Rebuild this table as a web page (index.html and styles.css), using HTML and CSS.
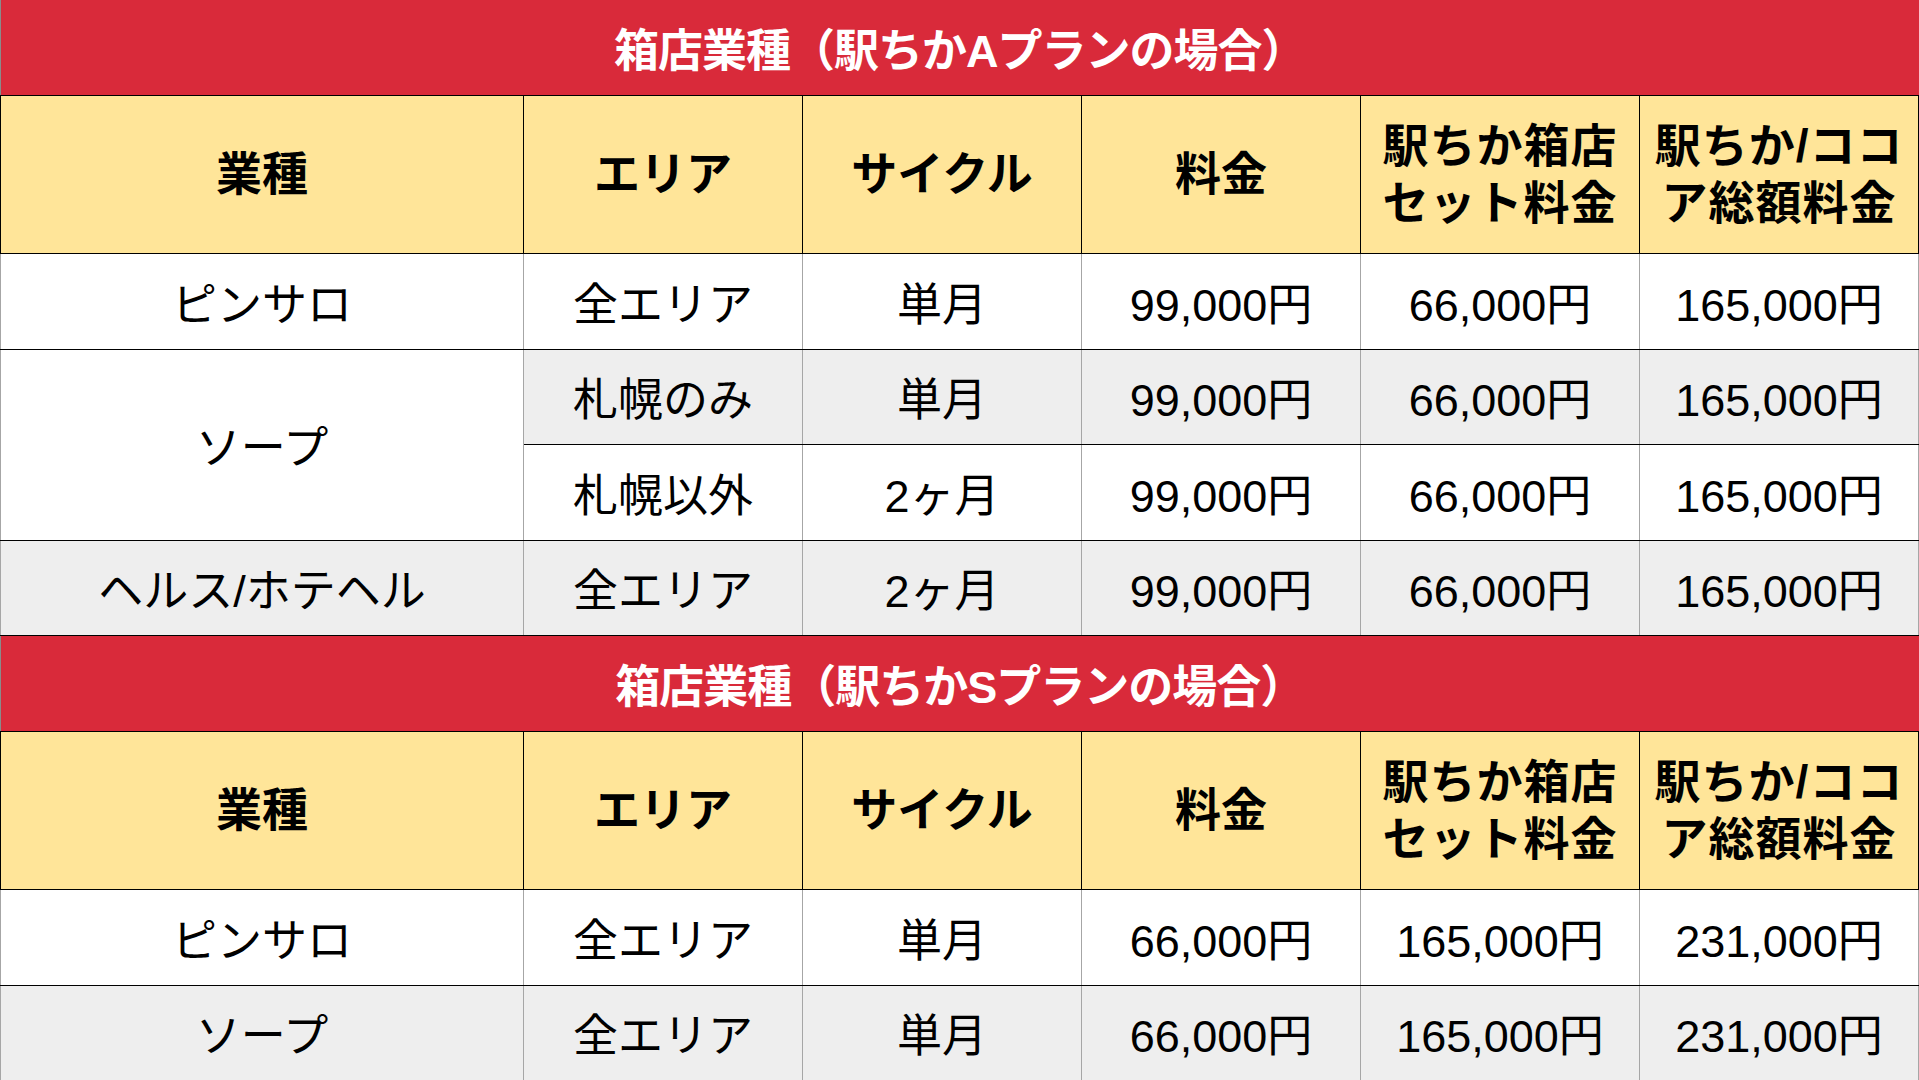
FILE: index.html
```html
<!DOCTYPE html>
<html lang="ja">
<head>
<meta charset="utf-8">
<title>箱店業種</title>
<link rel="stylesheet" href="styles.css">
</head>
<body>
<table class="price">
  <colgroup>
    <col class="c-type"><col class="c-n"><col class="c-n"><col class="c-n"><col class="c-n"><col class="c-n">
  </colgroup>
  <tr class="r-title"><th colspan="6" class="title">箱店業種（駅ちかAプランの場合）</th></tr>
  <tr class="r-head">
    <th>業種</th><th>エリア</th><th>サイクル</th><th>料金</th>
    <th class="two">駅ちか箱店<br>セット料金</th><th class="two">駅ちか/ココ<br>ア総額料金</th>
  </tr>
  <tr class="r-data">
    <td>ピンサロ</td><td>全エリア</td><td>単月</td><td>99,000円</td><td>66,000円</td><td>165,000円</td>
  </tr>
  <tr class="r-data alt">
    <td rowspan="2" class="white">ソープ</td><td>札幌のみ</td><td>単月</td><td>99,000円</td><td>66,000円</td><td>165,000円</td>
  </tr>
  <tr class="r-data">
    <td>札幌以外</td><td>2ヶ月</td><td>99,000円</td><td>66,000円</td><td>165,000円</td>
  </tr>
  <tr class="r-data alt">
    <td>ヘルス/ホテヘル</td><td>全エリア</td><td>2ヶ月</td><td>99,000円</td><td>66,000円</td><td>165,000円</td>
  </tr>
</table>
<table class="price">
  <colgroup>
    <col class="c-type"><col class="c-n"><col class="c-n"><col class="c-n"><col class="c-n"><col class="c-n">
  </colgroup>
  <tr class="r-title"><th colspan="6" class="title">箱店業種（駅ちかSプランの場合）</th></tr>
  <tr class="r-head">
    <th>業種</th><th>エリア</th><th>サイクル</th><th>料金</th>
    <th class="two">駅ちか箱店<br>セット料金</th><th class="two">駅ちか/ココ<br>ア総額料金</th>
  </tr>
  <tr class="r-data">
    <td>ピンサロ</td><td>全エリア</td><td>単月</td><td>66,000円</td><td>165,000円</td><td>231,000円</td>
  </tr>
  <tr class="r-data alt">
    <td>ソープ</td><td>全エリア</td><td>単月</td><td>66,000円</td><td>165,000円</td><td>231,000円</td>
  </tr>
</table>
</body>
</html>
```
FILE: styles.css
```css
html, body {
  margin: 0;
  padding: 0;
  background: #ffffff;
}
body {
  width: 1919px;
  overflow: hidden;
  font-family: "Liberation Sans", "Noto Sans CJK JP", sans-serif;
  color: #000;
}
.price {
  width: 1919px;
  border-collapse: collapse;
  table-layout: fixed;
}
.c-type { width: 523px; }
.c-n { width: 279px; }

.price th, .price td {
  padding: 0;
  text-align: center;
  vertical-align: middle;
}
.r-title { height: 95.5px; }
.title {
  background: #d92a3a;
  color: #ffffff;
  font-size: 45px;
  font-weight: bold;
  border-bottom: 1px solid #000;
  border-left: 1px solid #8a8a8a;
  letter-spacing: -1px;
}
.r-head { height: 158px; }
.r-head th {
  background: #ffe599;
  font-size: 46px;
  font-weight: bold;
  line-height: 57px;
  border: 1px solid #000;
}
.r-head th.two {
  letter-spacing: 1px;
}
.r-data { height: 95.5px; }
.r-data td {
  background: #ffffff;
  font-size: 45px;
  border-top: 1px solid #000;
  border-bottom: 1px solid #000;
  border-left: 1px solid #a6a6a6;
  border-right: 1px solid #a6a6a6;
}
.r-data.alt td {
  background: #eeeeee;
}
.r-data.alt td.white {
  background: #ffffff;
}
```
